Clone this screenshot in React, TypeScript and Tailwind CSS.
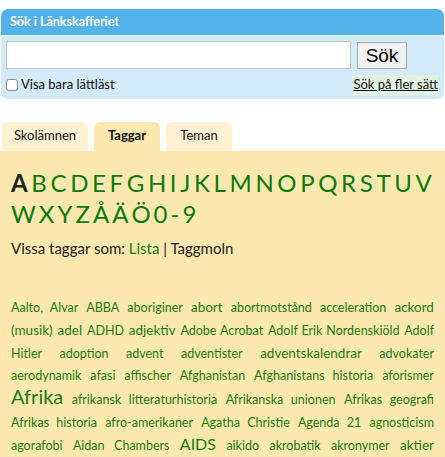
import React from "react";

const row1 = "B C D E F G H I J K L M N O P Q R S T U V".split(" ");
const row2 = "W X Y Z Å Ä Ö 0 - 9".split(" ");

const tags: [string, string][] = [
  ["Aalto, Alvar", "text-[12.5px]"],
  ["ABBA", "text-[12.5px]"],
  ["aboriginer", "text-[12.5px]"],
  ["abort", "text-[13.5px]"],
  ["abortmotstånd", "text-[12.5px]"],
  ["acceleration", "text-[12.5px]"],
  ["ackord (musik)", "text-[13.5px]"],
  ["adel", "text-[13.5px]"],
  ["ADHD", "text-[12.5px]"],
  ["adjektiv", "text-[13.5px]"],
  ["Adobe Acrobat", "text-[12.5px]"],
  ["Adolf Erik Nordenskiöld", "text-[12.5px]"],
  ["Adolf Hitler", "text-[12.5px]"],
  ["adoption", "text-[12.5px]"],
  ["advent", "text-[12.5px]"],
  ["adventister", "text-[12.5px]"],
  ["adventskalendrar", "text-[13.5px]"],
  ["advokater", "text-[12.5px]"],
  ["aerodynamik", "text-[12.5px]"],
  ["afasi", "text-[12.5px]"],
  ["affischer", "text-[12.5px]"],
  ["Afghanistan", "text-[12.5px]"],
  ["Afghanistans historia", "text-[12.5px]"],
  ["aforismer", "text-[12.5px]"],
  ["Afrika", "text-[20px]"],
  ["afrikansk litteraturhistoria", "text-[12.5px]"],
  ["Afrikanska unionen", "text-[12.5px]"],
  ["Afrikas geografi", "text-[12.5px]"],
  ["Afrikas historia", "text-[12.5px]"],
  ["afro-amerikaner", "text-[12.5px]"],
  ["Agatha Christie", "text-[12.5px]"],
  ["Agenda 21", "text-[12.5px]"],
  ["agnosticism", "text-[12.5px]"],
  ["agorafobi", "text-[12.5px]"],
  ["Aidan Chambers", "text-[12.5px]"],
  ["AIDS", "text-[16px]"],
  ["aikido", "text-[12.5px]"],
  ["akrobatik", "text-[12.5px]"],
  ["akronymer", "text-[12.5px]"],
  ["aktier", "text-[13.5px]"],
];

export default function App() {
  return (
    <div className="w-[445px] h-[457px] overflow-hidden bg-white font-['Lato',sans-serif] text-[#222]">
      <div className="pt-[9px] px-[1px]">
        <div className="rounded-[7px] overflow-hidden">
          <div className="bg-[#52b2ea] h-[26px] flex items-center px-[9px] text-white text-[12.5px] font-bold">
            Sök i Länkskafferiet
          </div>
          <div className="bg-[#d3eaf8] border-t border-white px-[5px] pt-[5px] pb-[4px]">
            <div className="flex items-center gap-[6px]">
              <input className="w-[345px] h-[28px] bg-white border border-[#c4c4c4]" />
              <button className="h-[27px] w-[50px] bg-[#f2f2f2] border border-[#aaa] text-[19px] text-black font-['Liberation_Sans',sans-serif] leading-none">
                Sök
              </button>
            </div>
            <div className="flex items-center justify-between mt-[6px] text-[13px] text-[#111]">
              <label className="flex items-center gap-[3px]">
                <span className="w-[12px] h-[12px] rounded-[3px] border border-[#888] bg-white inline-block" />
                Visa bara lättläst
              </label>
              <a className="underline bg-[#e2f2e2] px-[1px]">Sök på fler sätt</a>
            </div>
          </div>
        </div>
      </div>

      <div className="mt-[23px] flex gap-[6px] px-[2px] text-[13px] text-[#111]">
        <div className="w-[86px] h-[29px] rounded-t-[6px] bg-[#fef2d2] flex items-center justify-center">Skolämnen</div>
        <div className="w-[66px] h-[29px] rounded-t-[6px] bg-[#fde9b0] flex items-center justify-center font-bold">Taggar</div>
        <div className="w-[66px] h-[29px] rounded-t-[6px] bg-[#fef2d2] flex items-center justify-center">Teman</div>
      </div>

      <div className="bg-[#fde9b0] px-[11px] pt-[16px] h-[400px]">
        <div className="text-[24px] leading-[31px] text-[#0a7a0a]">
          <div className="flex justify-between pr-[2px]">
            <span className="text-[#222] font-bold">A</span>
            {row1.map((l) => (
              <a key={l}>{l}</a>
            ))}
          </div>
          <div className="flex gap-[3px]">
            {row2.map((l) => (
              <a key={l}>{l}</a>
            ))}
          </div>
        </div>
        <div className="mt-[8px] text-[15px]">
          Vissa taggar som: <a className="text-[#137a13]">Lista</a> | Taggmoln
        </div>
        <div className="mt-[36px] text-justify [text-align-last:justify] leading-[22.8px] text-[#1a7a12]">
          {tags.map(([t, c]) => (
            <React.Fragment key={t}>
              <a className={`${c} leading-none`}>{t}</a>{" "}
            </React.Fragment>
          ))}
        </div>
      </div>
    </div>
  );
}
